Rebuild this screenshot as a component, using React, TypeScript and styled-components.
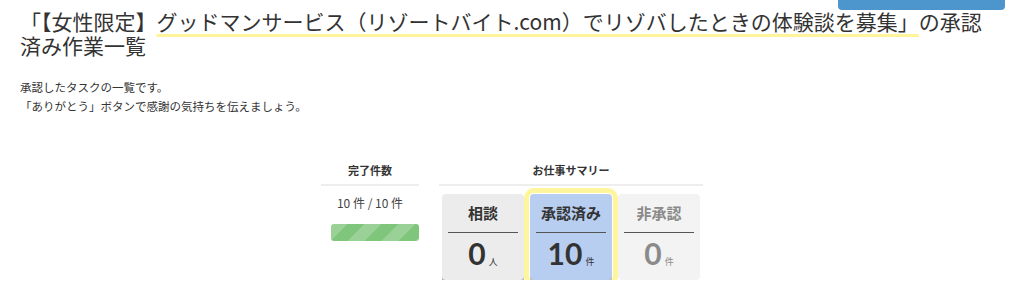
import { createGlobalStyle, styled } from "styled-components";

const GlobalStyle = createGlobalStyle`
  body {
    margin: 0;
    background: #fff;
    color: #333;
    font-family: "Noto Sans CJK JP", "Noto Sans", sans-serif;
  }
`;

const Page = styled.div`
  position: relative;
  padding: 9px 36px 0 20px;
`;

const TopButton = styled.div`
  position: absolute;
  top: 0;
  right: 19px;
  width: 167px;
  height: 10px;
  background: #4d95cd;
  border-radius: 0 0 4px 4px;
`;

const Title = styled.h1`
  margin: 0;
  font-size: 21px;
  font-weight: 400;
  line-height: 24px;
  color: #333;
`;

const Marker = styled.span`
  text-decoration: underline;
  text-decoration-color: #fff49a;
  text-decoration-thickness: 3px;
  text-underline-offset: 4px;
  text-decoration-skip-ink: none;
`;

const Lead = styled.p`
  margin: 21px 0 0;
  font-size: 11.5px;
  line-height: 19px;
  color: #333;
`;

const Summary = styled.div`
  display: flex;
  justify-content: center;
  gap: 20px;
  margin: 46px -16px 0 0;
`;

const Column = styled.div<{ $width: number }>`
  width: ${(p) => p.$width}px;
  display: flex;
  flex-direction: column;
`;

const ColumnHead = styled.div`
  font-size: 11px;
  font-weight: 700;
  line-height: 16px;
  text-align: center;
  padding-bottom: 6px;
  border-bottom: 2px solid #eeeeee;
`;

const Count = styled.div`
  margin-top: 9px;
  font-size: 12px;
  line-height: 16px;
  text-align: center;
  color: #444;
`;

const Progress = styled.div`
  margin: 13px 0 0 10px;
  height: 17px;
  border-radius: 3px;
  background-color: #7fc57c;
  background-image: linear-gradient(
    135deg,
    rgba(255, 255, 255, 0.2) 25%,
    transparent 25%,
    transparent 50%,
    rgba(255, 255, 255, 0.2) 50%,
    rgba(255, 255, 255, 0.2) 75%,
    transparent 75%,
    transparent
  );
  background-size: 34px 34px;
`;

const Cards = styled.div`
  display: grid;
  grid-template-columns: repeat(3, 1fr);
  margin-top: 8px;
`;

const Cell = styled.div`
  padding: 0 3px;
`;

type Tone = "gray" | "blue" | "light";

const bg: Record<Tone, string> = {
  gray: "#ececec",
  blue: "#b8cef1",
  light: "#f3f3f3",
};

const Card = styled.div<{ $tone: Tone; $active?: boolean }>`
  position: relative;
  height: 86px;
  border-radius: 4px;
  background: ${(p) => bg[p.$tone]};
  color: ${(p) => (p.$tone === "light" ? "#8a8a8a" : "#333")};
  box-shadow: ${(p) => (p.$tone === "light" ? "none" : "0 2px 0 #adadad")};
  outline: ${(p) => (p.$active ? "5px solid #fff59c" : "none")};
  outline-offset: 1px;
  padding-top: 9px;
  box-sizing: border-box;
`;

const CardTitle = styled.div`
  margin: 0 6px;
  font-size: 15px;
  font-weight: 700;
  line-height: 20px;
  text-align: center;
  padding-bottom: 9px;
  border-bottom: 1px solid #555;
`;

const CardValue = styled.div`
  margin-top: 5px;
  text-align: center;
  line-height: 30px;
`;

const Num = styled.span`
  font-family: "Lato", "Noto Sans", sans-serif;
  font-size: 30px;
  font-weight: 700;
`;

const Unit = styled.span`
  margin-left: 3px;
  font-size: 9px;
`;

const Pointer = styled.div`
  position: absolute;
  left: 50%;
  bottom: -9px;
  width: 24px;
  height: 3px;
  margin-left: -12px;
  background: #d3dbe7;
`;

const cards: { title: string; value: string; unit: string; tone: Tone; active?: boolean }[] = [
  { title: "相談", value: "0", unit: "人", tone: "gray" },
  { title: "承認済み", value: "10", unit: "件", tone: "blue", active: true },
  { title: "非承認", value: "0", unit: "件", tone: "light" },
];

export default function App() {
  return (
    <>
      <GlobalStyle />
      <Page>
        <TopButton />
        <Title>
          「【女性限定】
          <Marker>グッドマンサービス（リゾートバイト.com）でリゾバしたときの体験談を募集」</Marker>
          の承認済み作業一覧
        </Title>
        <Lead>
          承認したタスクの一覧です。
          <br />
          「ありがとう」ボタンで感謝の気持ちを伝えましょう。
        </Lead>
        <Summary>
          <Column $width={98}>
            <ColumnHead>完了件数</ColumnHead>
            <Count>10 件 / 10 件</Count>
            <Progress />
          </Column>
          <Column $width={264}>
            <ColumnHead>お仕事サマリー</ColumnHead>
            <Cards>
              {cards.map((c) => (
                <Cell key={c.title}>
                  <Card $tone={c.tone} $active={c.active}>
                    <CardTitle>{c.title}</CardTitle>
                    <CardValue>
                      <Num>{c.value}</Num>
                      <Unit>{c.unit}</Unit>
                    </CardValue>
                    {c.active && <Pointer />}
                  </Card>
                </Cell>
              ))}
            </Cards>
          </Column>
        </Summary>
      </Page>
    </>
  );
}
